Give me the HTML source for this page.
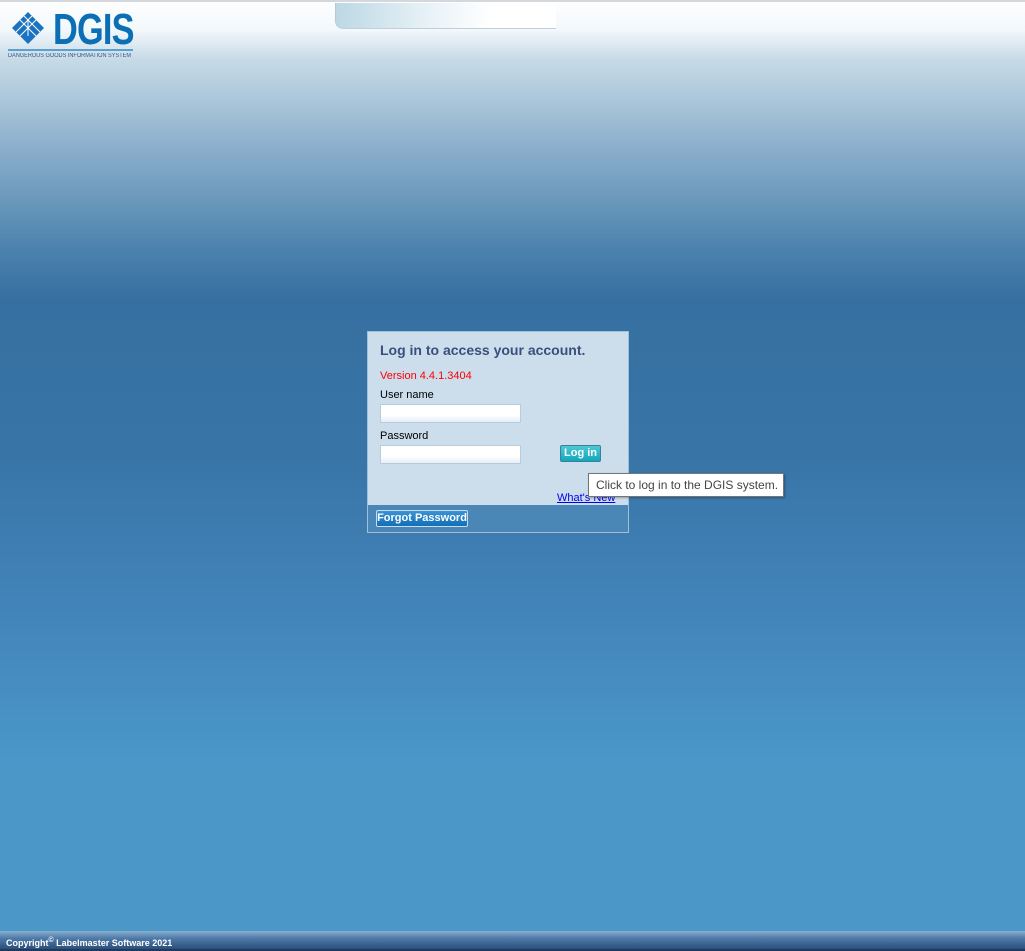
<!DOCTYPE html>
<html><head><meta charset="utf-8"><style>
html,body{margin:0;padding:0;width:1025px;height:951px;overflow:hidden;font-family:"Liberation Sans",sans-serif;}
body{position:relative;background:linear-gradient(to bottom,#ffffff 0px,#f2f8fb 30px,#c6dae6 60px,#8aaecb 150px,#4b82ad 250px,#3670a1 300px,#3874a6 450px,#4283b8 600px,#4a97c8 760px,#4a97c8 951px);}
.topline{position:absolute;left:0;top:0;width:1025px;height:2px;background:#d4d8dc;}
.tab{position:absolute;left:335px;top:3px;width:220px;height:25px;border-radius:0 0 0 8px;background:linear-gradient(to right,#bcd8e4,#e6f1f6 40%,#fff 70%);border-left:1px solid #b8c8d2;border-bottom:1px solid #c0d0da;}
.logo{position:absolute;left:11px;top:11px;}
.dgis{position:absolute;left:53px;top:9px;font-size:44px;font-weight:bold;color:#0b6fb6;letter-spacing:-1px;transform:scaleX(0.78);transform-origin:left top;line-height:42px;}
.lbar{position:absolute;left:8px;top:49px;width:125px;height:2px;background:#5aa0d0;}
.ltxt{position:absolute;left:8px;top:53px;font-size:6px;color:#2a5a8a;white-space:nowrap;transform:scaleX(0.93);transform-origin:left top;}
.box{position:absolute;left:367px;top:331px;width:260px;height:200px;border:1px solid #9fc0da;background:#ccdeec;}
.box h1{position:absolute;left:12px;top:10px;margin:0;font-size:14px;font-weight:bold;color:#3a4f7d;}
.ver{position:absolute;left:12px;top:38px;font-size:11px;color:#ff0000;}
.lab{position:absolute;left:12px;font-size:11px;color:#000;}
.inp{position:absolute;left:12px;width:139px;height:17px;border:1px solid #b6cde0;background:linear-gradient(#fff 60%,#e6eef8);}
.btn{position:absolute;left:192px;top:113px;width:39px;height:15px;border:1px solid #3b7f9a;border-radius:2px;background:linear-gradient(#4fc7d4,#10a8bd);color:#fff;font-size:11px;font-weight:bold;text-align:center;line-height:15px;}
.wn{position:absolute;left:189px;top:160px;font-size:11px;color:#0000ee;text-decoration:underline;}
.fbar{position:absolute;left:0;top:173px;width:260px;height:27px;background:#4a87b6;}
.fp{position:absolute;left:8px;top:5px;width:90px;height:15px;border:1px solid #c8dced;border-radius:2px;background:linear-gradient(#3b92d4,#1270b8);color:#fff;font-size:11px;font-weight:bold;text-align:center;line-height:15px;}
.tip{position:absolute;left:588px;top:473px;width:194px;height:22px;border:1px solid #767676;background:#fff;font-size:12px;color:#444;line-height:22px;text-indent:7px;box-shadow:1px 1px 2px rgba(0,0,0,.3);}
.foot{position:absolute;left:0;top:931px;width:1025px;height:18px;background:linear-gradient(#8ab0d0,#4f7aa8 40%,#2a4f7c);color:#fff;font-size:9px;font-weight:bold;line-height:19px;text-indent:6px;}
.foot sup{font-size:7px;}
.bot{position:absolute;left:0;top:949px;width:1025px;height:2px;background:#1e3b5e;}
</style></head><body>
<div class="topline"></div>
<div class="tab"></div>
<svg class="logo" width="34" height="34" viewBox="0 0 34 34">
<polygon points="17,1 33,17 17,33 1,17" fill="#1a72c0"/>
<g stroke="#fff" stroke-width="1" fill="none">
<line x1="9" y1="9" x2="25" y2="25"/><line x1="13" y1="5" x2="29" y2="21"/>
<line x1="25" y1="9" x2="9" y2="25"/><line x1="21" y1="5" x2="5" y2="21"/>
<line x1="17" y1="9" x2="17" y2="25"/>
</g></svg>
<div class="dgis">DGIS</div>
<div class="lbar"></div>
<div class="ltxt">DANGEROUS GOODS INFORMATION SYSTEM</div>
<div class="box">
<h1>Log in to access your account.</h1>
<div class="ver">Version 4.4.1.3404</div>
<div class="lab" style="top:57px">User name</div>
<div class="inp" style="top:72px"></div>
<div class="lab" style="top:98px">Password</div>
<div class="inp" style="top:113px"></div>
<div class="btn">Log in</div>
<div class="wn">What's New</div>
<div class="fbar"><div class="fp">Forgot Password</div></div>
</div>
<div class="tip">Click to log in to the DGIS system.</div>
<div class="foot">Copyright<sup>©</sup> Labelmaster Software 2021</div>
<div class="bot"></div>
</body></html>
